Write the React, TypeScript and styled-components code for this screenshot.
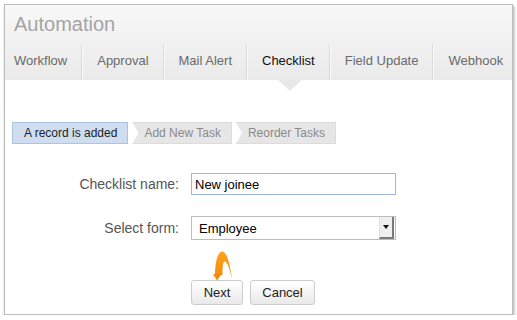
import React from "react";
import styled, { createGlobalStyle } from "styled-components";

const Global = createGlobalStyle`
  html, body { margin: 0; padding: 0; background: #fff; }
  body { font-family: "Liberation Sans", Arial, Helvetica, sans-serif; }
  * { box-sizing: border-box; }
`;

const Frame = styled.div`
  margin: 4px 0 0 4px;
  width: 509px;
  height: 311px;
  border: 1px solid #bdbdbd;
  box-shadow: 1px 2px 3px rgba(0, 0, 0, 0.35);
  background: #fff;
  display: flex;
  flex-direction: column;
`;

const Header = styled.div`
  height: 75px;
  background: linear-gradient(#f8f8f8, #eaeaea);
  display: flex;
  flex-direction: column;
`;

const Title = styled.h1`
  margin: 0;
  height: 39px;
  padding-left: 9px;
  font-size: 20px;
  line-height: 38px;
  font-weight: normal;
  color: #a4a4a4;
`;

const Tabs = styled.div`
  display: flex;
  height: 36px;
`;

const Tab = styled.div<{ $active?: boolean; $first?: boolean }>`
  position: relative;
  flex-shrink: 0;
  white-space: nowrap;
  height: 36px;
  line-height: 33px;
  font-size: 13px;
  padding: ${(p) => (p.$first ? "0 14px 0 9px" : "0 14px 0 15px")};
  color: ${(p) => (p.$active ? "#111" : "#6a6a6a")};
  border-left: ${(p) => (p.$first ? "none" : "1px solid #dadada")};
  box-shadow: ${(p) => (p.$first ? "none" : "inset 1px 0 0 #fafafa")};
  &::after {
    content: "";
    display: ${(p) => (p.$active ? "block" : "none")};
    position: absolute;
    left: 50%;
    top: 36px;
    margin-left: -10px;
    width: 0;
    height: 0;
    border-left: 12px solid transparent;
    border-right: 12px solid transparent;
    border-top: 11px solid #e8e8e8;
  }
`;

const Body = styled.div`
  display: flex;
  flex-direction: column;
`;

const Steps = styled.div`
  display: flex;
  gap: 4px;
  margin: 42px 0 0 7px;
  height: 22px;
`;

const Step = styled.div<{ $active?: boolean }>`
  height: 22px;
  line-height: 20px;
  font-size: 12px;
  padding: 0 10px 0 11px;
  color: ${(p) => (p.$active ? "#1e1e1e" : "#8a8a8a")};
  background: ${(p) => (p.$active ? "#cfddf1" : "#e6e6e6")};
  border: 1px solid ${(p) => (p.$active ? "#afc3df" : "#dcdcdc")};
  clip-path: ${(p) =>
    p.$active ? "none" : "polygon(0 0, 100% 0, 100% 100%, 0 100%, 6px 50%)"};
  white-space: nowrap;
`;

const Form = styled.div`
  display: grid;
  grid-template-columns: 174px 205px;
  column-gap: 12px;
  row-gap: 21px;
  margin-top: 29px;
  align-items: center;
`;

const Label = styled.label`
  text-align: right;
  font-size: 14px;
  color: #555;
`;

const TextInput = styled.input`
  height: 22px;
  width: 205px;
  border: 1px solid #9fb6d8;
  padding: 0 3px;
  font-family: inherit;
  font-size: 13px;
  color: #000;
  outline: none;
  background: #fff;
`;

const Select = styled.div`
  height: 24px;
  width: 205px;
  border: 1px solid #bcbcbc;
  display: flex;
  align-items: center;
  justify-content: space-between;
  padding: 0 1px 0 7px;
  font-size: 13px;
  color: #000;
  background: #fff;
`;

const SelectButton = styled.div`
  width: 15px;
  height: 22px;
  background: #efefef;
  border-left: 1px solid #e0e0e0;
  border-right: 2px solid #7a7a7a;
  border-bottom: 2px solid #7a7a7a;
  display: flex;
  align-items: center;
  justify-content: center;
  &::before {
    content: "";
    width: 0;
    height: 0;
    border-left: 3px solid transparent;
    border-right: 3px solid transparent;
    border-top: 4px solid #111;
  }
`;

const Buttons = styled.div`
  display: flex;
  gap: 7px;
  margin: 40px 0 0 186px;
`;

const ButtonWrap = styled.div`
  position: relative;
`;

const Button = styled.button<{ $w: number }>`
  width: ${(p) => p.$w}px;
  height: 25px;
  border: 1px solid #cdcdcd;
  border-radius: 3px;
  background: linear-gradient(#ffffff, #e9e9e9);
  font-family: inherit;
  font-size: 13px;
  color: #222;
  padding: 0;
`;

const Pointer = styled.svg`
  position: absolute;
  left: 9px;
  top: -35px;
  width: 36px;
  height: 36px;
  pointer-events: none;
`;

export default function App() {
  return (
    <>
      <Global />
      <Frame>
        <Header>
          <Title>Automation</Title>
          <Tabs>
            <Tab $first>Workflow</Tab>
            <Tab>Approval</Tab>
            <Tab>Mail Alert</Tab>
            <Tab $active>Checklist</Tab>
            <Tab>Field Update</Tab>
            <Tab>Webhook</Tab>
          </Tabs>
        </Header>
        <Body>
          <Steps>
            <Step $active>A record is added</Step>
            <Step>Add New Task</Step>
            <Step>Reorder Tasks</Step>
          </Steps>
          <Form>
            <Label>Checklist name:</Label>
            <TextInput defaultValue="New joinee" />
            <Label>Select form:</Label>
            <Select>
              <span>Employee</span>
              <SelectButton />
            </Select>
          </Form>
          <Buttons>
            <ButtonWrap>
              <Button $w={52}>Next</Button>
              <Pointer viewBox="0 0 36 36">
                <defs>
                  <linearGradient id="og" x1="0" y1="0" x2="0" y2="1">
                    <stop offset="0" stopColor="#ffa21f" />
                    <stop offset="1" stopColor="#f48a0a" />
                  </linearGradient>
                </defs>
                <path
                  d="M15 30 C15 20 17 7 22 6.5 C27 6 30 20 32 33.5 C30 26 28 17 24.5 16.5 C22.5 16.5 22.5 24 22.5 30 Z"
                  fill="url(#og)"
                />
                <path d="M13 29 L21.5 29 L17 35.5 Z" fill="#f48a0a" />
              </Pointer>
            </ButtonWrap>
            <Button $w={65}>Cancel</Button>
          </Buttons>
        </Body>
      </Frame>
    </>
  );
}
